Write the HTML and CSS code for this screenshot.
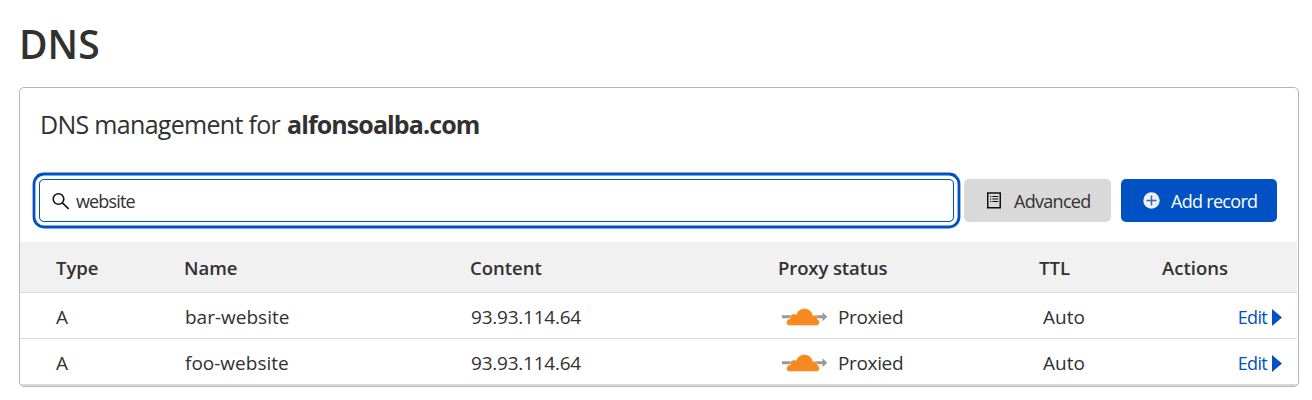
FILE: index.html
```html
<!DOCTYPE html>
<html lang="en">
<head>
<meta charset="utf-8">
<title>DNS</title>
<link rel="stylesheet" href="styles.css">
</head>
<body>
<svg width="0" height="0" class="defs">
  <symbol id="cloud" viewBox="0 0 46 18">
    <path fill="#999" d="M0 7.200h40.500V4.300l4.700 4.500-4.700 4.500v-3H0z"/>
    <path class="cloud-shape" stroke="#fff" stroke-width=".4" d="M7.500 17.400C5.400 17.400 4.300 16 4.500 14.200 4.800 12.200 6.200 10.800 8.200 10.700 7.900 6.900 11.300 4.900 14.300 6.500 15.400 3 18.500.6 22.300.6c4.500 0 8.100 3.200 8.700 7.400 2.700-.8 4.800.8 4.400 3.300 2.900.9 2.600 6.100-.6 6.100z"/>
  </symbol>
</svg>
<h1 class="page-title">DNS</h1>
<main class="panel">
  <h2 class="panel-title"><span class="lead">DNS management for</span><strong class="domain">alfonsoalba.com</strong></h2>
  <div class="toolbar">
    <label class="search">
      <svg class="search-icon" width="18" height="18" viewBox="0 0 18 18"><circle cx="6.500" cy="7" r="5.300"/><path d="M10.300 10.800l6.400 6"/></svg>
      <span class="query">website</span>
    </label>
    <button class="btn btn-advanced">
      <svg class="list-icon" width="14" height="17" viewBox="0 0 14 17"><path d="M.75 1h12.500v14.700H.75z" stroke-width="1.500"/><path d="M3 4.500h1.300M5.300 4.500H11.200M3 7h1.300M5.300 7H11.200M3 9.500h1.300M5.300 9.500H11.200" stroke-width="1.200"/></svg>
      <span>Advanced</span>
    </button>
    <button class="btn btn-add">
      <svg class="plus-icon" width="17" height="17" viewBox="0 0 17 17"><circle cx="8.500" cy="8.500" r="8.200" fill="#f1f1f1"/><path d="M8.500 3.500v10M3.500 8.500h10" stroke="#2f69bd" stroke-width="1.500"/></svg>
      <span>Add record</span>
    </button>
  </div>
  <div class="table">
    <div class="row head">
      <span>Type</span><span>Name</span><span>Content</span><span class="h-proxy">Proxy status</span><span>TTL</span><span>Actions</span>
    </div>
    <div class="row">
      <span>A</span><span class="name">bar-website</span><span class="ip">93.93.114.64</span>
      <span class="proxy"><svg width="46" height="18"><use href="#cloud"/></svg><span>Proxied</span></span>
      <span class="ttl">Auto</span>
      <a class="edit"><span>Edit</span><svg width="10" height="17" viewBox="0 0 10 17"><path d="M0 0l10 8.500L0 17z"/></svg></a>
    </div>
    <div class="row">
      <span>A</span><span class="name">foo-website</span><span class="ip">93.93.114.64</span>
      <span class="proxy"><svg width="46" height="18"><use href="#cloud"/></svg><span>Proxied</span></span>
      <span class="ttl">Auto</span>
      <a class="edit"><span>Edit</span><svg width="10" height="17" viewBox="0 0 10 17"><path d="M0 0l10 8.500L0 17z"/></svg></a>
    </div>
  </div>
</main>
</body>
</html>
```
FILE: styles.css
```css
* { box-sizing: border-box; }
body {
  margin: 0;
  padding: 17px 13px 0 19px;
  background: #fff;
  color: #313131;
  font-family: "Open Sans", "Noto Sans", sans-serif;
  font-size: 19px;
  font-weight: 400;
}
.defs { display: block; }
.cloud-shape { fill: #f6891f; }
.page-title {
  margin: 0;
  height: 70px;
  line-height: 54px;
  font-size: 39px;
  font-weight: 600;
}
.panel {
  height: 300px;
  border: 1px solid #b5b5b5;
  border-radius: 5px;
  overflow: hidden;
}
.panel-title {
  display: flex;
  gap: 6px;
  margin: 0;
  padding: 18px 0 0 20px;
  height: 91px;
  line-height: 36px;
  font-size: 25px;
  font-weight: 400;
  white-space: nowrap;
}
.lead { width: 241px; letter-spacing: -0.7px; }
.domain { font-weight: 700; letter-spacing: -0.9px; }
.toolbar { display: flex; padding-left: 19px; height: 63px; }
.search {
  display: flex;
  align-items: center;
  gap: 6px;
  width: 915px;
  height: 43px;
  padding-left: 12px;
  border: 1px solid #0051c3;
  border-radius: 5px;
  box-shadow: 0 0 0 3.600px #fff, 0 0 0 6.400px #0051c3;
}
.search-icon { fill: none; stroke: #111; stroke-width: 1.600; }
.query { font-size: 18px; letter-spacing: -0.85px; }
.btn {
  display: flex;
  align-items: center;
  height: 43px;
  margin: 0 0 0 10px;
  padding: 0 0 0 23px;
  border: 0;
  border-radius: 5px;
  font: 400 18px "Open Sans", "Noto Sans", sans-serif;
  letter-spacing: -0.7px;
  color: #313131;
  white-space: nowrap;
}
.btn-advanced { width: 147px; gap: 13px; background: #d9d9d9; }
.btn-add { width: 156px; gap: 11px; padding-left: 22px; background: #0051c3; color: #fff; }
.list-icon { fill: none; stroke: #111; }
.table { width: 1277px; border-bottom: 1px solid #d9d9d9; }
.row {
  display: grid;
  grid-template-columns: 128px 286px 308px 261px 123px 1fr;
  align-items: center;
  height: 46px;
  padding: 2px 0 0 36px;
  border-bottom: 1px solid #d9d9d9;
  white-space: nowrap;
}
.head { height: 51px; padding-top: 0; background: #f1f1f1; font-weight: 600; font-size: 18.500px; }
.h-proxy { letter-spacing: -0.1px; }
.name { padding-left: 1px; }
.ip { padding-left: 1px; letter-spacing: -0.23px; }
.proxy { display: flex; align-items: center; gap: 10px; padding-left: 4px; letter-spacing: -0.35px; }
.ttl { padding-left: 4px; }
.edit {
  display: flex;
  align-items: center;
  justify-content: flex-end;
  gap: 5px;
  padding: 1px 15px 0 0;
  color: #0051c3;
  font-size: 18px;
  letter-spacing: -0.7px;
}
.edit path { fill: #0051c3; }
```
